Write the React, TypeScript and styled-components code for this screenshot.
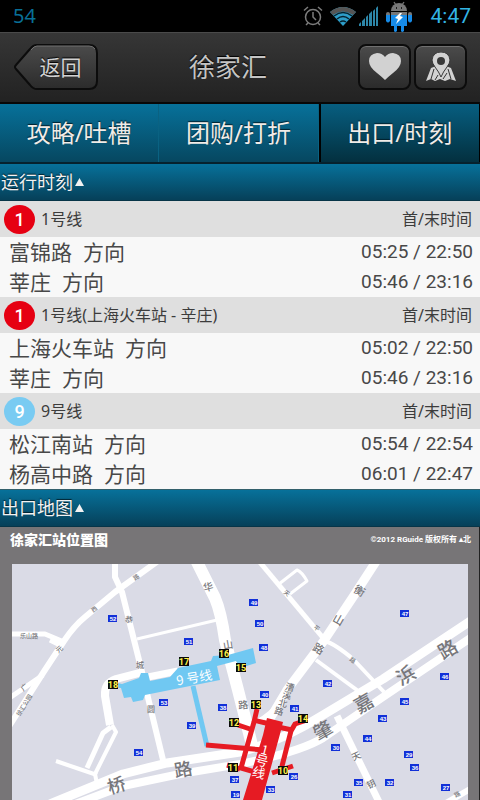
import React from "react";
import styled, { createGlobalStyle } from "styled-components";

const Global = createGlobalStyle`
  * { box-sizing: border-box; }
  body { margin: 0; background: #777577; font-family: "Noto Sans", "Noto Sans CJK SC", sans-serif; }
  button { font: inherit; color: inherit; border: 0; padding: 0; background: none; cursor: pointer; }
  h1, h2, h3 { margin: 0; font-weight: 400; }
`;

const Page = styled.div`
  height: 100vh;
  overflow: hidden;
  display: flex;
  flex-direction: column;
`;

const StatusBar = styled.div`
  flex: none;
  display: flex;
  align-items: center;
  height: 32px;
  padding: 0 9px 0 13px;
  background: #000;
  color: #086f97;
  font-size: 20px;
  line-height: 32px;
`;

const StatusIcons = styled.div`
  display: flex;
  align-items: center;
  gap: 3px;
  margin-left: auto;
  svg { display: block; }
`;

const Clock = styled.time`
  margin-left: 18px;
  color: #33b5e5;
  font-family: Roboto, sans-serif;
  font-size: 21px;
`;

const Header = styled.header`
  flex: none;
  display: grid;
  grid-template-columns: auto 1fr auto;
  align-items: center;
  height: 72px;
  padding: 0 13px 2px 14px;
  border-top: 1px solid #4a4a4a;
  border-bottom: 2px solid #080808;
  background: linear-gradient(#363636, #222);
`;

const BackButton = styled.button`
  display: grid;
  width: 84px;
  height: 46px;
  > * { grid-area: 1 / 1; }
`;

const BackLabel = styled.span`
  padding-left: 9px;
  color: #d2d2d2;
  font-size: 21px;
  line-height: 46px;
  text-shadow: 0 -1px 1px #000;
`;

const Title = styled.h1`
  color: #c4c4c4;
  font-size: 26px;
  line-height: 46px;
  text-align: center;
  text-shadow: 0 -1px 1px #000;
`;

const Actions = styled.div`
  display: flex;
  gap: 3px;
`;

const IconButton = styled.button`
  display: flex;
  align-items: center;
  justify-content: center;
  width: 53px;
  height: 46px;
  border: 2px solid #0c0c0c;
  border-radius: 8px;
  background: linear-gradient(#4b4b4b, #2b2b2b);
  box-shadow: inset 0 1px 0 #707070;
`;

const Tabs = styled.nav`
  flex: none;
  display: flex;
  height: 60px;
  border-bottom: 2px solid #06222e;
  background: linear-gradient(#07719a, #064760);
`;

const Tab = styled.button<{ $active?: boolean }>`
  flex: 1;
  color: #f0ece8;
  font-size: 24px;
  line-height: 58px;
  text-shadow: 0 -1px 1px #02202c;
  border-left: ${(p) => (p.$active ? "2px solid #000" : "0")};
  border-right: 1px solid ${(p) => (p.$active ? "#000" : "#0a6282")};
  background: ${(p) => (p.$active ? "linear-gradient(#075e80, #03303f)" : "none")};
`;

const SectionBar = styled.button`
  flex: none;
  display: flex;
  align-items: center;
  gap: 2px;
  width: 100%;
  height: 37px;
  padding-left: 1px;
  border-bottom: 1px solid #073548;
  background: linear-gradient(#07719a, #064059);
  color: #f2f2f2;
`;

const SectionTitle = styled.span`
  font-size: 18px;
  line-height: 36px;
  text-shadow: 0 -1px 1px #02202c;
`;

const Schedule = styled.div`
  flex: none;
  border-bottom: 1px solid #33606c;
`;

const LineTable = styled.table`
  width: 100%;
  border-collapse: collapse;
  background: #f8f8f8;
  color: #484848;
  th, td { padding: 0; font-weight: 400; }
`;

const HeadRow = styled.tr`
  height: 36px;
  background: #dfdfdf;
  color: #3c3c3c;
  font-size: 16px;
  line-height: 24px;
`;

const LineCell = styled.div`
  display: flex;
  align-items: center;
  gap: 6px;
  padding-left: 4px;
`;

const Badge = styled.span<{ $color: string }>`
  width: 31px;
  height: 29px;
  border-radius: 50%;
  background: ${(p) => p.$color};
  color: #fff;
  font: 500 18px/29px Roboto, sans-serif;
  text-align: center;
`;

const TripRow = styled.tr`
  height: 30px;
  line-height: 30px;
`;

const Direction = styled.th`
  && { padding-left: 9px; }
  font-size: 21px;
  text-align: left;
  white-space: pre;
`;

const Times = styled.td`
  && { padding-right: 7px; }
  font-family: Roboto, sans-serif;
  font-size: 19px;
  text-align: right;
`;

const TimesHead = styled.th`
  && { padding-right: 8px; }
  text-align: right;
`;

const MapPanel = styled.section`
  flex: none;
  padding: 0 11px 0 12px;
  background: #777577;
  border-right: 1px solid #222;
`;

const MapHeader = styled.div`
  display: flex;
  align-items: center;
  justify-content: space-between;
  height: 37px;
  padding-bottom: 12px;
  color: #fff;
  font-weight: 700;
`;

const MapTitle = styled.h3`
  margin-left: -2px;
  font-size: 14px;
  line-height: 24px;
  font-weight: 900;
`;

const Copyright = styled.small`
  margin-right: -3px;
  font-family: Roboto, "Noto Sans CJK SC", sans-serif;
  font-size: 8px;
  line-height: 24px;
`;

const MapSvg = styled.svg`
  display: block;
  width: 100%;
  background: #dadbe6;
  text { text-anchor: middle; dominant-baseline: central; }
`;

const lines = [
  { no: "1", color: "#e60012", name: "1号线", trips: [["富锦路", "05:25 / 22:50"], ["莘庄", "05:46 / 23:16"]] },
  { no: "1", color: "#e60012", name: "1号线(上海火车站 - 辛庄)", trips: [["上海火车站", "05:02 / 22:50"], ["莘庄", "05:46 / 23:16"]] },
  { no: "9", color: "#79cbf2", name: "9号线", trips: [["松江南站", "05:54 / 22:54"], ["杨高中路", "06:01 / 22:47"]] },
];

const roads: [number, string][] = [
  [6, "M158 561 L115 592 L85 617 Q74 626 64 641 L43 673 L8 728"],
  [5, "M43 675 L8 699"],
  [5, "M8 634 H45 L64 642"],
  [5, "M50 640 L60 645"],
  [6, "M115 560 V577 L122 592 L134 640 L142 672 L150 706 L164 764"],
  [3, "M137 639 L217 620"],
  [8, "M143 672 L116 679 Q104 683 105 696 L110 725"],
  [5, "M111 727 L103 733 L87 768"],
  [4, "M112 725 L116 732 L95 774 L97 784"],
  [4, "M56 761 L97 775"],
  [7, "M148 677 L178 671"],
  [12, "M196 560 L215 598 Q221 612 225 640 L238 690 L252 745"],
  [9, "M50 804 L123 774 L167 763 L240 752 Q280 742 323 715 L383 679 L472 620"],
  [8, "M70 806 L123 786 L180 774 L240 764 Q300 752 323 738 L383 697 L472 637"],
  [9, "M377 560 L353 597 L323 642 L287 690 L268 722"],
  [4, "M283 699 Q270 715 256 722"],
  [5, "M258 560 L324 639"],
  [4, "M325 641 Q335 644 353 659 L384 692"],
  [3, "M279 584 L297 570 Q302 572 307 581 L290 594"],
  [4, "M316 660 L361 693"],
  [7, "M337 716 L357 757 L380 804"],
  [6, "M446 803 L472 788"],
];

const stops: [string, number, number][] = [
  ["52", 113, 619], ["51", 189, 642], ["49", 254, 603], ["50", 260, 624], ["47", 405, 614],
  ["53", 164, 703], ["38", 223, 708], ["39", 192, 726], ["54", 139, 753], ["48", 264, 648],
  ["40", 265, 695], ["41", 295, 709], ["42", 328, 684], ["46", 445, 677], ["45", 405, 702],
  ["43", 383, 719], ["44", 368, 739], ["30", 336, 748], ["29", 409, 755], ["36", 415, 768],
  ["26", 294, 777], ["35", 359, 783], ["32", 390, 783], ["31", 348, 795], ["27", 446, 788],
  ["33", 271, 790], ["37", 235, 780], ["19", 236, 795],
];

const exits: [string, number, number][] = [
  ["18", 113, 685], ["17", 184, 662], ["16", 224, 654], ["15", 241, 668], ["12", 234, 723],
  ["13", 256, 705], ["14", 303, 719], ["11", 233, 768], ["10", 283, 771],
];

const names: [string, number, number, number, number][] = [
  ["路", 136, 577, 6, -35], ["西", 94, 609, 6, -35], ["华", 208, 586, 10, -15], ["恭", 129, 619, 8, 5],
  ["城", 140, 664, 8, 0], ["圆", 151, 708, 8, 0], ["山", 228, 644, 10, -10], ["路", 243, 704, 10, -5],
  ["衡", 360, 590, 11, 30], ["山", 339, 619, 11, 30], ["路", 319, 648, 11, 30],
  ["漕", 290, 687, 9, 15], ["溪", 287, 695, 9, 15], ["北", 283, 703, 9, 15], ["路", 279, 711, 9, 15],
  ["天", 287, 593, 6, 35], ["平", 317, 628, 6, 35], ["路", 353, 660, 6, 35],
  ["桥", 116, 784, 18, -17], ["路", 183, 768, 18, -10], ["肇", 322, 729, 19, -30],
  ["嘉", 363, 702, 19, -30], ["浜", 405, 674, 19, -30], ["路", 447, 648, 19, -30],
  ["天", 356, 756, 9, -25], ["钥", 371, 784, 9, -25], ["路", 457, 794, 6, -30],
  ["乐山路", 29, 635, 6, 0], ["广", 24, 687, 7, -40], ["元", 59, 649, 7, -40],
  ["徐汇公园", 24, 705, 6, -58],
];

const AlarmIcon = () => (
  <svg width="22" height="22" viewBox="0 0 22 22" fill="none" stroke="#7c7c7c" strokeWidth="1.5">
    <circle cx="11" cy="12" r="7.5" />
    <path d="M11 7v5l3 3M2 5.500l4-3.500M20 5.500l-4-3.500M6 18l-2 2M16 18l2 2" />
  </svg>
);

const WifiIcon = () => (
  <svg width="26" height="20" viewBox="0 0 26 20">
    <path d="M0 6Q13-4 26 6L13 20Z" fill="#2d9dc8" />
    <path d="M0 6Q13-4 26 6L23 9Q13 2 3 9Z" fill="#555" />
    <path d="M4 10Q13 3 22 10M7 13Q13 8 19 13M10 16Q13 14 16 16" fill="none" stroke="#06222e" strokeWidth="1.500" />
  </svg>
);

const SignalIcon = () => (
  <svg width="20" height="20" viewBox="0 0 20 20" fill="#2d86a8">
    <path d="M0 20v-2l2-2v4ZM3 20v-5l3-3v8ZM7 20v-9l2-2v11ZM10 20V8l3-3v15ZM14 20V5l2-2v17ZM17 20V2l2-2v20Z" />
  </svg>
);

const AndroidIcon = () => (
  <svg width="28" height="31" viewBox="0 0 28 31">
    <path d="M9 1l2 3M19 1l-2 3" stroke="#777" strokeWidth="1.300" />
    <path d="M6 10a8 8 0 0 1 16 0Z" fill="#777" />
    <path d="M1 13q0-2 2-2t2 2v1H1ZM23 13q0-2 2-2t2 2v1h-4ZM6 11h16v3H6Z" fill="#777" />
    <path d="M1 14h4v6q-2 3-4 0ZM23 14h4v6q-2 3-4 0ZM6 14h16v11h-3v5q-2 2-3 0v-5h-4v5q-2 2-3 0v-5H6Z" fill="#168be8" />
    <path d="M11 7h1M16 7h1" stroke="#000" strokeWidth="1.500" />
    <path d="M15 12l-5 5 3 1-2 5 7-7-3-1 2-3Z" fill="#fff" />
  </svg>
);

const BackShape = () => (
  <svg width="84" height="46" viewBox="0 0 84 46" aria-hidden="true">
    <defs>
      <linearGradient id="back" x1="0" y1="0" x2="0" y2="1">
        <stop offset="0" stopColor="#4b4b4b" />
        <stop offset="1" stopColor="#2b2b2b" />
      </linearGradient>
    </defs>
    <path d="M23 1H75Q83 1 83 9V37Q83 45 75 45H23Q19 45 16 41L2 25Q0 23 2 21L16 5Q19 1 23 1Z" fill="url(#back)" stroke="#0c0c0c" strokeWidth="2" />
    <path d="M17 6Q20 2 23 2H75Q79 2 81 5" fill="none" stroke="#707070" />
  </svg>
);

const HeartIcon = () => (
  <svg width="32" height="28" viewBox="0 0 32 28">
    <path d="M16 27Q13 24 8 20Q0 14 0 8Q0 1 8 0Q13 0 16 4Q19 0 24 0Q32 1 32 8Q32 14 24 20Q19 24 16 27Z" fill="#d2d2d2" />
  </svg>
);

const PinIcon = () => (
  <svg width="32" height="30" viewBox="0 0 32 30">
    <path d="M1 29L6 16L11 14L16 22L21 14L26 16L31 29L25 27L20 29L15 27L10 29L6 27Z" fill="#d2d2d2" />
    <path d="M9 17L6 27M13 23L10 28M23 17L26 27M18 27L22 21" stroke="#333" fill="none" />
    <path d="M16 25Q14 20 10 15Q7 11 7 8Q8 0 16 0Q24 0 25 8Q25 11 22 15Q18 20 16 25Z" fill="#d2d2d2" stroke="#383838" />
    <circle cx="16" cy="9" r="4" fill="#383838" />
  </svg>
);

const Arrow = () => (
  <svg width="9" height="8" viewBox="0 0 9 8" aria-hidden="true">
    <path d="M4.500 0L9 8H0Z" fill="#f2f2f2" />
  </svg>
);

const StationMap = () => (
  <MapSvg viewBox="12 564 456 236" role="img" aria-label="徐家汇站位置图">
    <g fill="none" stroke="#fff" strokeLinejoin="round">
      {roads.map(([w, d]) => <path key={d} d={d} strokeWidth={w} />)}
    </g>
    <g fontFamily="Noto Sans CJK SC" fontWeight="500" fill="#77777b">
      {names.map(([t, x, y, s, r]) => (
        <text key={`${x}-${y}`} fontSize={s} transform={`translate(${x} ${y}) rotate(${r})`}>{t}</text>
      ))}
    </g>
    <path d="M113 682L122 684L139 678L141 673H148L150 681L170 677L178 668L211 661L213 656L228 655L253 648L256 663L240 668L236 661L217 666L220 680L145 695L143 700L133 702L131 697L124 698L121 688L113 687Z" fill="#70c8f2" />
    <path d="M193 686L207 746" stroke="#70c8f2" strokeWidth="5" />
    <g fill="none" stroke="#e61b23" strokeWidth="5">
      <path d="M206 745L264 750" />
      <path d="M257 709L254 722L241 768L258 773" />
      <path d="M253 720L270 724M238 725L250 729M227 765L240 769M278 727L292 730" />
      <path d="M307 720L295 724L291 731L281 770M272 773L293 766" />
    </g>
    <path d="M267 718L283 722L280 734L262 800H243L263 735Z" fill="#e61b23" />
    <g fontFamily="Noto Sans CJK SC" fill="#fff">
      <text fontSize="13" transform="translate(194 677) rotate(-10)">9 号线</text>
      <g fontSize="13">
        <text transform="translate(265 749) rotate(15)">1</text>
        <text transform="translate(262 760) rotate(15)">号</text>
        <text transform="translate(259 772) rotate(15)">线</text>
      </g>
    </g>
    <g fontFamily="Liberation Sans" fontWeight="700" fontSize="6">
      {stops.map(([n, x, y]) => (
        <g key={n}>
          <rect x={x - 5} y={y - 4} width="9" height="7" fill="#1230d8" />
          <text x={x} y={y} fill="#fff">{n}</text>
        </g>
      ))}
    </g>
    <g fontFamily="Roboto" fontWeight="700" fontSize="9">
      {exits.map(([n, x, y]) => (
        <g key={n}>
          <rect x={x - 5} y={y - 5} width="10" height="9" fill="#0a0a0a" />
          <text x={x} y={y} fill="#fff24a">{n}</text>
        </g>
      ))}
    </g>
  </MapSvg>
);

export default function App() {
  return (
    <>
      <Global />
      <Page>
        <StatusBar>
          <span>54</span>
          <StatusIcons>
            <AlarmIcon />
            <span />
            <WifiIcon />
            <SignalIcon />
            <span />
            <AndroidIcon />
          </StatusIcons>
          <Clock>4:47</Clock>
        </StatusBar>
        <Header>
          <BackButton>
            <BackShape />
            <BackLabel>返回</BackLabel>
          </BackButton>
          <Title>徐家汇</Title>
          <Actions>
            <IconButton aria-label="收藏"><HeartIcon /></IconButton>
            <IconButton aria-label="地图"><PinIcon /></IconButton>
          </Actions>
        </Header>
        <Tabs>
          <Tab>攻略/吐槽</Tab>
          <Tab>团购/打折</Tab>
          <Tab $active aria-current="page">出口/时刻</Tab>
        </Tabs>
        <SectionBar aria-expanded="true">
          <SectionTitle>运行时刻</SectionTitle>
          <Arrow />
        </SectionBar>
        <Schedule>
          {lines.map((line) => (
            <LineTable key={line.name}>
              <thead>
                <HeadRow>
                  <th scope="col">
                    <LineCell>
                      <Badge $color={line.color}>{line.no}</Badge>
                      <span>{line.name}</span>
                    </LineCell>
                  </th>
                  <TimesHead scope="col">首/末时间</TimesHead>
                </HeadRow>
              </thead>
              <tbody>
                {line.trips.map(([to, time]) => (
                  <TripRow key={to}>
                    <Direction scope="row">{`${to}  方向`}</Direction>
                    <Times>{time}</Times>
                  </TripRow>
                ))}
              </tbody>
            </LineTable>
          ))}
        </Schedule>
        <SectionBar aria-expanded="true">
          <SectionTitle>出口地图</SectionTitle>
          <Arrow />
        </SectionBar>
        <MapPanel>
          <MapHeader>
            <MapTitle>徐家汇站位置图</MapTitle>
            <Copyright>©2012 RGuide 版权所有 ▴北</Copyright>
          </MapHeader>
          <StationMap />
        </MapPanel>
      </Page>
    </>
  );
}
